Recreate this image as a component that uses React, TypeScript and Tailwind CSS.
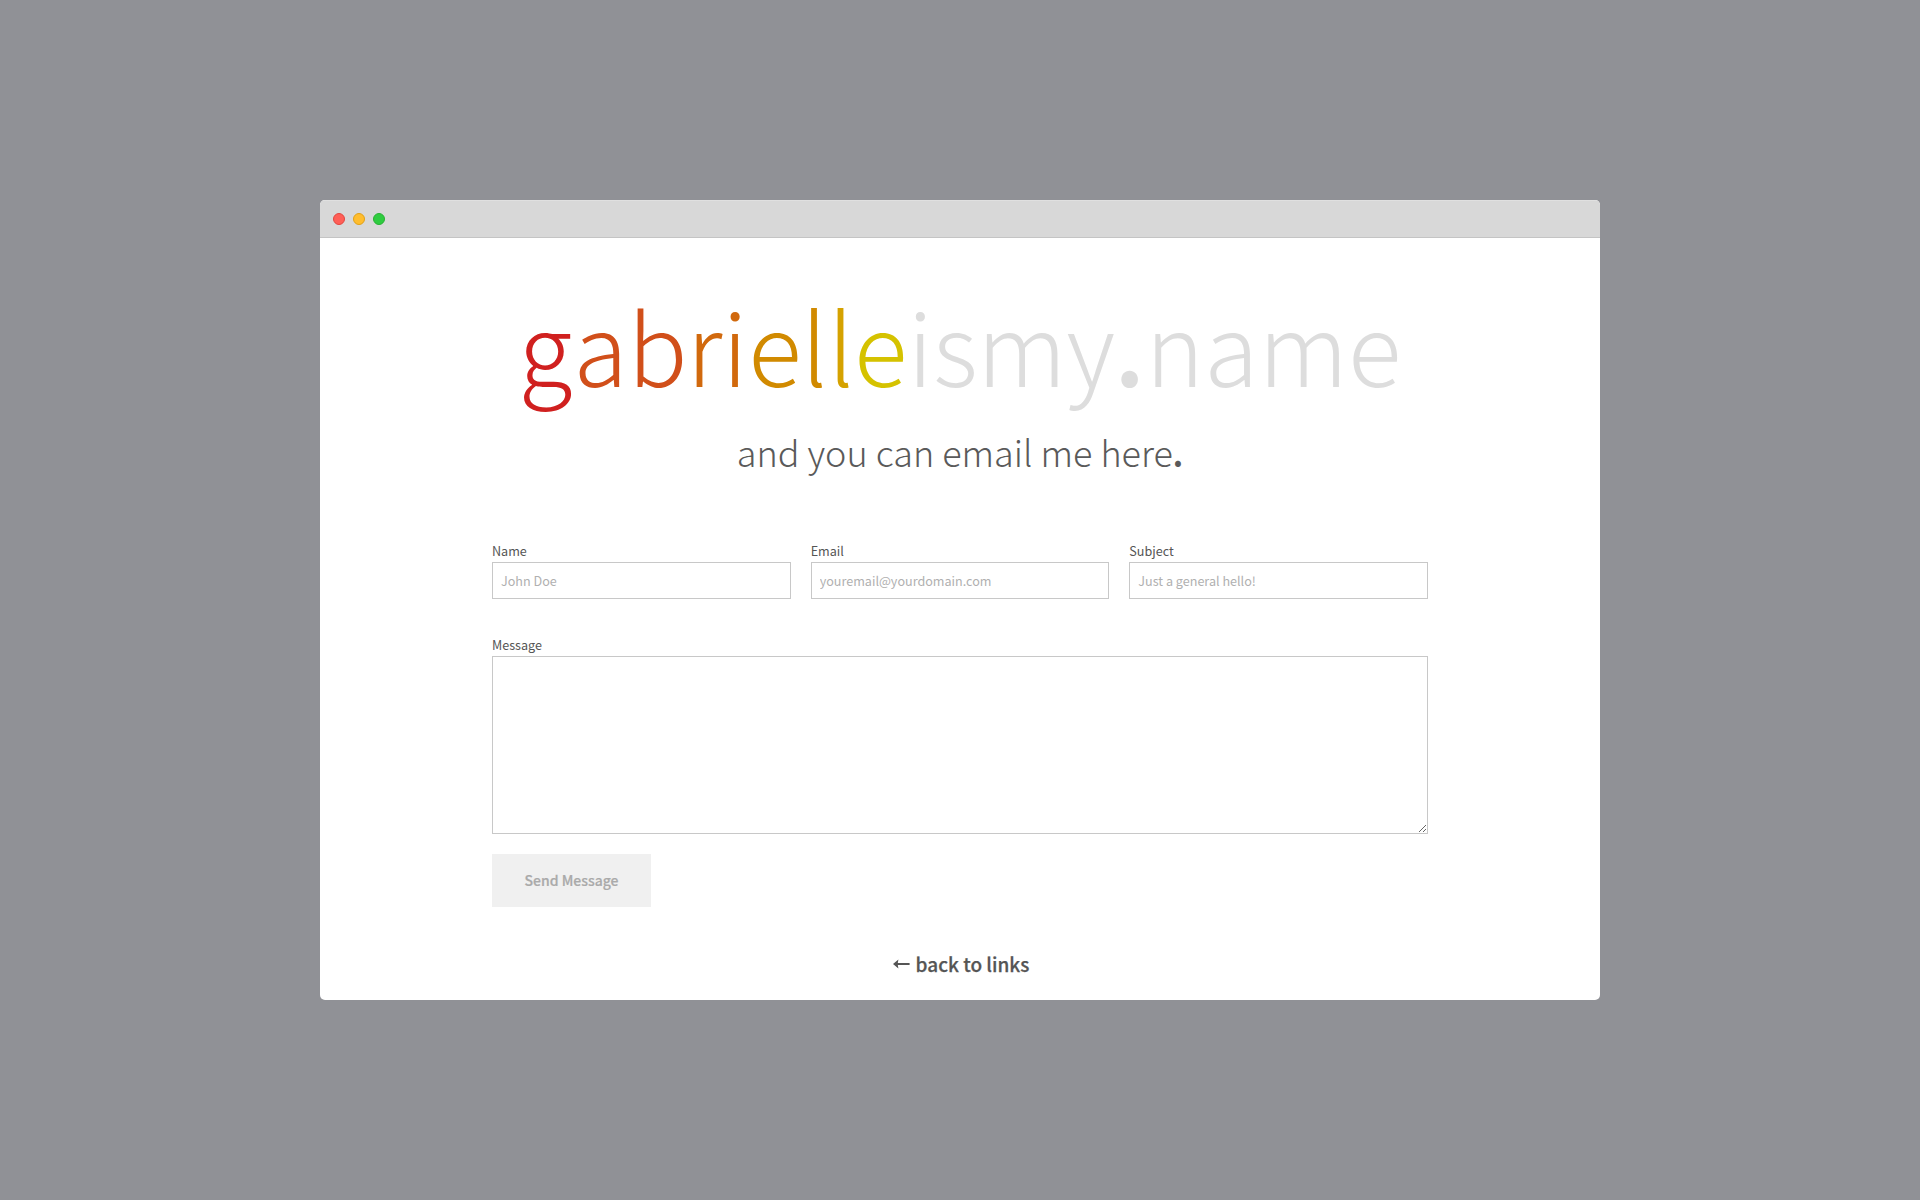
const LETTERS = [
  ['g', 'text-[#d0201f] mr-px'],
  ['a', 'text-[#d14f1a]'],
  ['b', 'text-[#d14f1a] -mr-px'],
  ['r', 'text-[#d1690d]'],
  ['i', 'text-[#d1690d] mr-[0.5px]'],
  ['e', 'text-[#d18a00] -mr-[0.5px]'],
  ['l', 'text-[#d18a00]'],
  ['l', 'text-[#d5a200]'],
  ['e', 'text-[#d5c200]'],
];

const FIELDS = [
  { label: 'Name', placeholder: 'John Doe' },
  { label: 'Email', placeholder: 'youremail@yourdomain.com' },
  { label: 'Subject', placeholder: 'Just a general hello!' },
];

export default function App() {
  return (
    <div className="flex h-[1200px] w-full items-center justify-center bg-[#909196] font-['Noto_Sans_CJK_SC',sans-serif] text-[#555]">
      <div className="flex h-[800px] w-[1280px] flex-col overflow-hidden rounded-[5px] bg-white">
        <div className="flex h-[38px] shrink-0 items-center gap-2 border-t border-b border-t-[#e0e0e0] border-b-[#c4c4c4] bg-[#d8d8d8] px-[13px]">
          <span className="size-3 rounded-full border border-[#e2463f] bg-[#ff5f57]" />
          <span className="size-3 rounded-full border border-[#e1a116] bg-[#ffbd2e]" />
          <span className="size-3 rounded-full border border-[#27b132] bg-[#2fcc40]" />
        </div>
        <main className="mx-auto flex w-[936px] flex-col">
          <h1 className="mt-[33px] text-center text-[99px] leading-[146px] font-light tracking-[0.1px] whitespace-nowrap text-[#ddd]">
            {LETTERS.map(([ch, color], i) => (
              <span key={i} className={color}>
                {ch}
              </span>
            ))}
            is<span className="-ml-px">my</span>
            <span className="mr-px text-[90px] leading-none font-bold">.</span>name
          </h1>
          <h2 className="mt-2 text-center text-[36px] leading-[52px] font-light text-[#5a5a5a]">
            and you can email me here<span className="text-[32px] leading-none font-bold">.</span>
          </h2>
          <form>
            <div className="mt-16 grid grid-cols-3 gap-5">
              {FIELDS.map((f) => (
                <label key={f.label} className="flex flex-col text-[12.6px] leading-5">
                  <span className="mb-px">{f.label}</span>
                  <input
                    placeholder={f.placeholder}
                    className="h-[37px] border border-[#c8c8c8] px-2 placeholder:text-[#b0b0b0]"
                  />
                </label>
              ))}
            </div>
            <label className="mt-9 flex flex-col text-[12.6px] leading-5">
              <span className="mb-px">Message</span>
              <textarea className="h-[178px] resize-y border border-[#c8c8c8]" />
            </label>
            <button
              type="button"
              className="mt-5 block h-[53px] w-[159px] bg-[#f0f0f0] text-[14px] font-medium text-[#aaa] [-webkit-text-stroke:0.2px]"
            >
              Send Message
            </button>
          </form>
          <a className="mt-[41px] flex items-center justify-center gap-1.5 pl-[2px] text-[19px] leading-8 font-medium [-webkit-text-stroke:0.25px]">
            <svg viewBox="0 0 17 10" className="h-[10px] w-[17px]">
              <path d="M0 5 5.4 0.6 4.8 4.1H16.6V5.9H4.8L5.4 9.4Z" fill="currentColor" stroke="none" />
            </svg>
            <span>back to links</span>
          </a>
        </main>
      </div>
    </div>
  );
}
